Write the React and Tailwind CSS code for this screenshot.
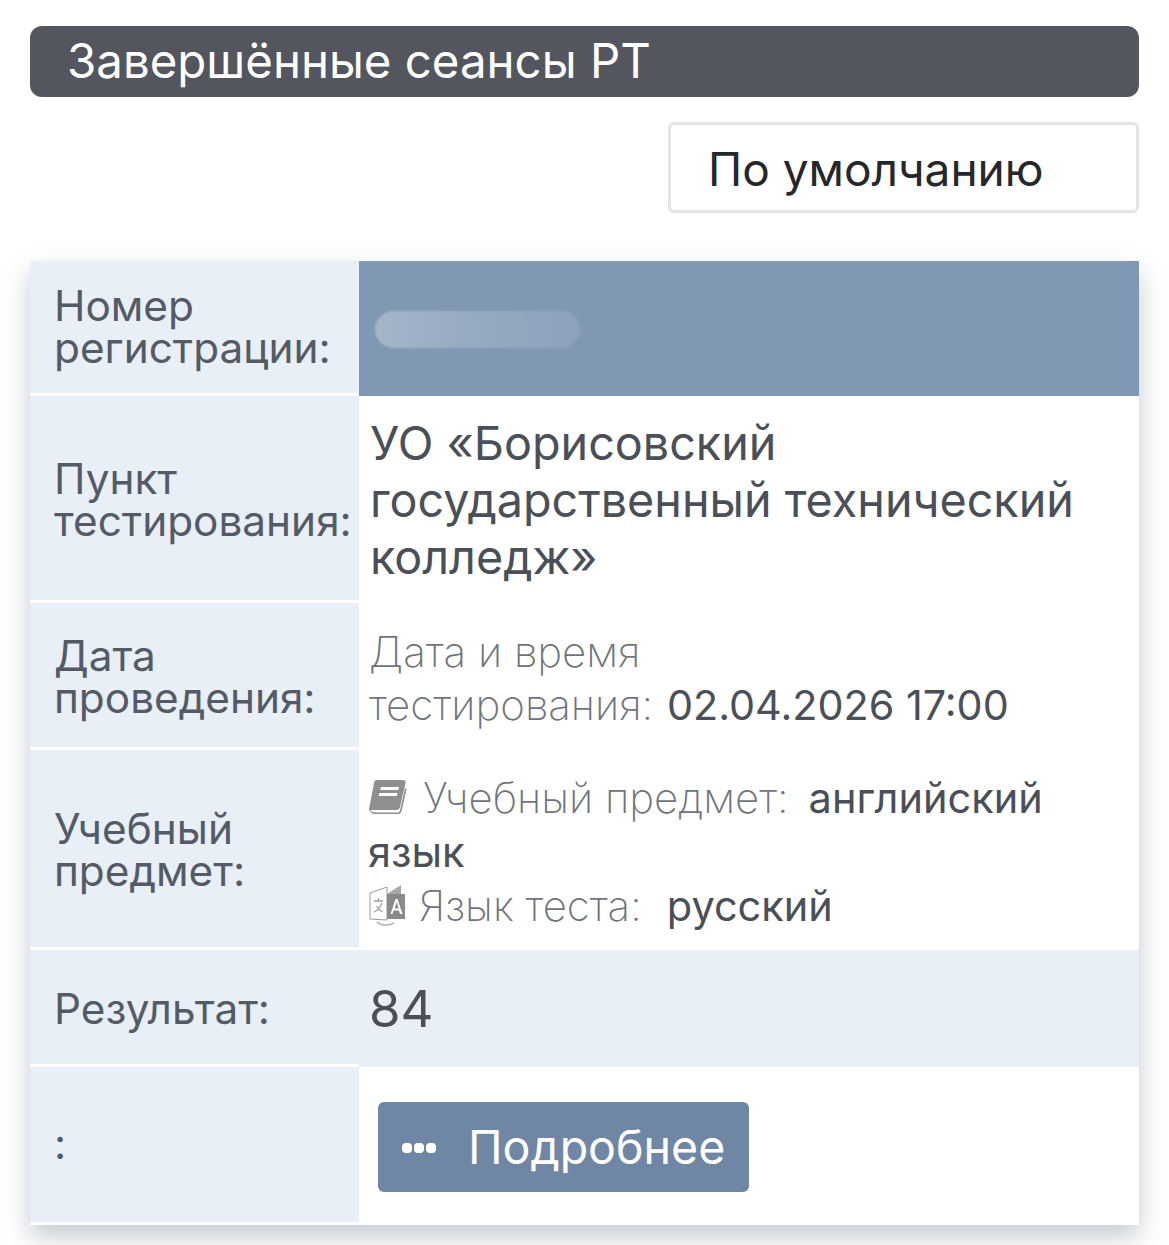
const BookIcon = () => (
  <svg width="40" height="38" viewBox="0 0 40 38" className="shrink-0">
    <path d="M9 1h26c2 0 3 1 2.600 3l-5.600 24c-.5 2-1.500 3-3.500 3H5c-2.500 0-4 1.500-4 0 0-1 .2-3 .8-5L6 4c.4-2 1.200-3 3-3z" fill="#8f8f8f" />
    <path d="M13 8h18l-.8 3H12.200zM11.500 14h18l-.8 3h-18z" fill="#fff" />
    <path d="M2 31c.5 2.500 2 4 5 4h23c2 0 3-1 3.600-3l5-22-1.500-1-5 22c-.5 2-1.500 2.500-3.500 2.500H7c-2 0-3.500-1-5-2.500z" fill="#8f8f8f" />
  </svg>
);

const LangIcon = () => (
  <svg width="40" height="44" viewBox="0 0 40 44" className="shrink-0">
    <path d="M2 9l17-6v33l-17-1z" fill="#fff" stroke="#9a9a9a" strokeWidth="1" />
    <path d="M19 10L33 1v9z" fill="#a8a8a8" />
    <path d="M19 10h18v25H19z" fill="#8a8a8a" />
    <path d="M22.500 30l5-15h2l5 15h-2.500l-1.100-3.500h-5.300L24.500 30zm4.200-5.500h4l-2-6.500z" fill="#fff" />
    <path d="M6 17h9M10.500 14v4M14 19c-2 5-5 8-8 9M8.500 22c1.500 2.500 3.500 4.500 6 6" fill="none" stroke="#a0a0a0" strokeWidth="1.300" />
    <path d="M9 38c4 4 12 4 17 1" fill="none" stroke="#a0a0a0" strokeWidth="1.200" />
  </svg>
);

const Label = ({ children, className = "" }) => (
  <div className={`w-[329px] shrink-0 bg-[#e8eff6] border-b-[3px] border-white flex items-center pl-[24px] text-[42.300px] leading-[42px] text-[#555b66] ${className}`}>
    <div>{children}</div>
  </div>
);

export default function App() {
  return (
    <div className="w-[1169px] h-[1245px] overflow-hidden bg-white pt-[26px] pl-[30px] font-['Inter',sans-serif]">
      <div className="w-[1109px] h-[71px] rounded-[12px] bg-[#53565f] pl-[37px] pb-[1px] flex items-center text-white text-[47.400px]">
        Завершённые сеансы РТ
      </div>

      <div className="flex justify-end w-[1109px] mt-[25px]">
        <div className="w-[471px] h-[91px] rounded-[6px] border-[3px] border-[#e3e5e8] pl-[37px] pt-[3px] flex items-center text-[46px] text-[#25272b]">
          По умолчанию
        </div>
      </div>

      <div className="w-[1109px] mt-[48px] flex flex-col bg-white shadow-[0_12px_24px_rgba(90,105,125,0.35)]">
        <div className="flex h-[135px]">
          <Label>Номер<br />регистрации:</Label>
          <div className="flex-1 bg-[#8198b5] flex items-center pl-[16px]">
            <div className="w-[205px] h-[37px] mt-[2px] rounded-full blur-[1px] bg-gradient-to-r from-[#a5b6ca] via-[#95a9c0] to-[#8ea2bc]" />
          </div>
        </div>

        <div className="flex h-[207px]">
          <Label className="pt-[3px]">Пункт<br />тестирования:</Label>
          <div className="flex-1 pl-[11px] pt-[1px] flex items-center text-[46.700px] leading-[57px] text-[#4a4f58]">
            <div>УО «Борисовский<br />государственный технический<br />колледж»</div>
          </div>
        </div>

        <div className="flex h-[147px]">
          <Label className="pt-[3px]">Дата<br />проведения:</Label>
          <div className="flex-1 pl-[10px] pt-[3px] flex items-center text-[42px] leading-[53px] text-[#6f747c] font-extralight">
            <div>
              Дата и время<br />
              тестирования: <span className="ml-[2px] text-[41.300px] font-normal text-[#4a4f58]">02.04.2026 17:00</span>
            </div>
          </div>
        </div>

        <div className="flex h-[200px]">
          <Label className="pt-[3px]">Учебный<br />предмет:</Label>
          <div className="flex-1 pl-[9px] pt-[3px] flex flex-col justify-center text-[42px] leading-[54px] text-[#6f747c] font-extralight">
            <div className="flex items-center gap-[15px]">
              <BookIcon />
              <span>Учебный предмет:</span>
              <span className="ml-[5px] text-[41.500px] font-normal text-[#4a4f58]">английский</span>
            </div>
            <div className="text-[41.500px] font-normal text-[#4a4f58]">язык</div>
            <div className="flex items-center gap-[11px]">
              <LangIcon />
              <span>Язык теста:</span>
              <span className="ml-[14px] text-[41.500px] font-normal text-[#4a4f58]">русский</span>
            </div>
          </div>
        </div>

        <div className="flex h-[117px] bg-[#e8eff6]">
          <Label className="pt-[3px]">Результат:</Label>
          <div className="flex-1 pl-[10px] pt-[2px] flex items-center text-[51px] text-[#4a4f58]">84</div>
        </div>

        <div className="flex h-[158px]">
          <Label className="pb-[2px]">:</Label>
          <div className="flex-1 pl-[19px] pt-[2px] flex items-center">
            <div className="w-[371px] h-[90px] rounded-[6px] bg-[#6f87a5] flex items-center pl-[24px] pt-[2px] gap-[32px] text-white text-[46.500px]">
              <div className="flex gap-[2px]">
                <span className="w-[10px] h-[10px] rounded-[4px] bg-white" />
                <span className="w-[10px] h-[10px] rounded-[4px] bg-white" />
                <span className="w-[10px] h-[10px] rounded-[4px] bg-white" />
              </div>
              Подробнее
            </div>
          </div>
        </div>
      </div>
    </div>
  );
}
